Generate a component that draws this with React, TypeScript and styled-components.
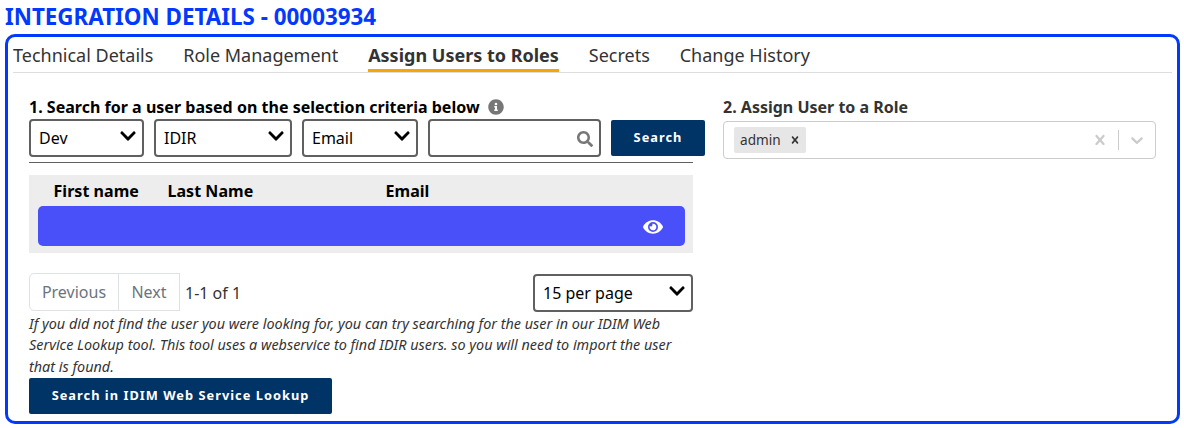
import React from 'react';
import styled, { createGlobalStyle } from 'styled-components';
import { FaChevronDown, FaEye, FaInfoCircle, FaSearch } from 'react-icons/fa';

const GlobalStyle = createGlobalStyle`
  * { box-sizing: border-box; }
  body {
    margin: 0;
    background: #fff;
    color: #333;
    font: 16px/24px 'Noto Sans', sans-serif;
  }
`;

const Page = styled.main`
  height: 428px;
  padding: 0 4px 4px 5px;
  overflow: hidden;
`;

const Title = styled.h1`
  margin: 0;
  height: 34px;
  color: #0339fd;
  font-size: 22.4px;
  font-weight: 700;
  line-height: 33px;
  white-space: nowrap;
`;

const Panel = styled.section`
  height: 390px;
  border: 3px solid #0339fd;
  border-radius: 10px;
  padding: 0 5px;
`;

const Tabs = styled.nav`
  display: flex;
  gap: 29.9px;
  height: 36px;
  border-bottom: 1px solid #ddd;
`;

const Tab = styled.a<{ $active?: boolean }>`
  height: 35px;
  padding-top: 5px;
  border-bottom: 3px solid ${(p) => (p.$active ? '#fba500' : 'transparent')};
  font-size: 18px;
  font-weight: ${(p) => (p.$active ? 700 : 400)};
  line-height: 27px;
  white-space: nowrap;
`;

const Columns = styled.div`
  display: flex;
  gap: 30px;
  padding: 22px 16px 0;
`;

const SearchColumn = styled.div`
  width: 664px;
  flex: none;
`;

const RoleColumn = styled.div`
  flex: 1;
`;

const Heading = styled.h2<{ $dark?: boolean }>`
  display: flex;
  align-items: center;
  gap: 8px;
  margin: 0;
  height: 24px;
  color: ${(p) => (p.$dark ? '#000' : '#333')};
  font-size: 16px;
  font-weight: 700;
  letter-spacing: ${(p) => (p.$dark ? '0.015px' : 'normal')};
  white-space: nowrap;

  svg { color: #777; }
`;

const Filters = styled.div`
  display: flex;
  align-items: center;
  gap: 10px;
  width: 676px;
  height: 38px;
`;

const SelectBox = styled.div<{ $width: number }>`
  display: flex;
  justify-content: space-between;
  width: ${(p) => p.$width}px;
  height: 38px;
  flex: none;
  padding: 0 5px 0 8px;
  border: 2px solid #606060;
  border-radius: 4px;
  color: #000;
  line-height: 35px;

  svg { margin-top: 6px; }
`;

const SearchField = styled.label`
  display: flex;
  align-items: center;
  width: 173px;
  height: 38px;
  padding-right: 6px;
  border: 2px solid #606060;
  border-radius: 4px;

  svg { color: #777; flex: none; margin-top: 1px; }
`;

const Input = styled.input`
  width: 100%;
  min-width: 0;
  border: 0;
  outline: 0;
  background: transparent;
  font: inherit;
`;

const Button = styled.button<{ $width: number }>`
  width: ${(p) => p.$width}px;
  height: 36px;
  flex: none;
  padding: 0 0 2px;
  border: 0;
  border-radius: 2px;
  background: #036;
  color: #fff;
  font: 700 12.8px/34px 'Noto Sans', sans-serif;
  letter-spacing: 1.02px;
  white-space: nowrap;
`;

const Rule = styled.hr`
  margin: 5px 0 12px;
  border: 0;
  border-top: 1px solid #606060;
`;

const Results = styled.div`
  height: 78px;
  padding: 0 8px 7px 9px;
  background: #ededed;
`;

const ResultsHead = styled.div`
  display: grid;
  grid-template-columns: 114px 218px 1fr;
  height: 31px;
  padding-left: 15.5px;
  color: #000;
  font-weight: 700;
  letter-spacing: 0.04px;
  line-height: 32px;
`;

const ResultRow = styled.div`
  display: flex;
  align-items: center;
  justify-content: flex-end;
  height: 40px;
  padding: 1px 22px 0 0;
  border-radius: 5px;
  background: #4950fa;
  color: #fff;
`;

const Pager = styled.div`
  display: flex;
  height: 39px;
  margin-top: 20px;
`;

const PageButton = styled.button<{ $first?: boolean }>`
  height: 38px;
  width: ${(p) => (p.$first ? 90 : 62)}px;
  margin-left: ${(p) => (p.$first ? 0 : -1)}px;
  padding: 0;
  border: 1px solid #dee2e6;
  border-radius: ${(p) => (p.$first ? '5px 0 0 5px' : '0')};
  background: #fff;
  color: #6c757d;
  font: 16px/36px 'Noto Sans', sans-serif;
`;

const PageCount = styled.span`
  flex: 1;
  padding-left: 5px;
  line-height: 40px;
`;

const PageSize = styled.div`
  margin-top: 1px;
`;

const Hint = styled.p`
  margin: 1px 0 0;
  height: 65px;
  font-size: 14.4px;
  font-style: italic;
  line-height: 21.4px;
  white-space: nowrap;
`;

const RoleSelect = styled.div`
  display: flex;
  align-items: center;
  height: 38px;
  margin-top: 2px;
  padding: 0 8px 0 10px;
  border: 1px solid #ccc;
  border-radius: 4px;
  color: #ccc;
`;

const Chip = styled.span`
  display: flex;
  align-items: center;
  height: 26px;
  margin-right: auto;
  padding: 0 4px 0 6px;
  gap: 7px;
  border-radius: 2px;
  background: #e6e6e6;
  color: #333;
  font-size: 13.6px;
`;

const Separator = styled.span`
  width: 1px;
  height: 20px;
  margin: 0 8px;
  background: #ccc;
`;

const crossPath =
  'M14.348 14.849c-0.469 0.469-1.229 0.469-1.697 0l-2.651-3.030-2.651 3.029c-0.469 0.469-1.229 0.469-1.697 0-0.469-0.469-0.469-1.229 0-1.697l2.758-3.15-2.759-3.152c-0.469-0.469-0.469-1.228 0-1.697s1.228-0.469 1.697 0l2.652 3.031 2.651-3.031c0.469-0.469 1.228-0.469 1.697 0s0.469 1.229 0 1.697l-2.758 3.152 2.758 3.15c0.469 0.469 0.469 1.229 0 1.698z';
const caretPath =
  'M4.516 7.548c0.436-0.446 1.043-0.481 1.576 0l3.908 3.747 3.908-3.747c0.533-0.481 1.141-0.446 1.574 0 0.436 0.445 0.408 1.197 0 1.615-0.406 0.418-4.695 4.502-4.695 4.502-0.217 0.223-0.502 0.335-0.787 0.335s-0.57-0.112-0.789-0.335c0 0-4.287-4.084-4.695-4.502s-0.436-1.17 0-1.615z';

const GlyphSvg = styled.svg`
  display: block;
  fill: currentColor;
`;

const Glyph = ({ d, size }: { d: string; size: number }) => (
  <GlyphSvg width={size} height={size} viewBox="0 0 20 20">
    <path d={d} />
  </GlyphSvg>
);

const Select = ({ value, width }: { value: string; width: number }) => (
  <SelectBox $width={width}>
    {value}
    <FaChevronDown size={18} />
  </SelectBox>
);

const tabs = ['Technical Details', 'Role Management', 'Assign Users to Roles', 'Secrets', 'Change History'];

export default function App() {
  return (
    <Page>
      <GlobalStyle />
      <Title>INTEGRATION DETAILS - 00003934</Title>
      <Panel>
        <Tabs>
          {tabs.map((name, i) => (
            <Tab key={name} $active={i === 2}>{name}</Tab>
          ))}
        </Tabs>
        <Columns>
          <SearchColumn>
            <Heading $dark>
              1. Search for a user based on the selection criteria below
              <FaInfoCircle size={16} />
            </Heading>
            <Filters>
              <Select value="Dev" width={115} />
              <Select value="IDIR" width={138} />
              <Select value="Email" width={116} />
              <SearchField>
                <Input aria-label="Search text" />
                <FaSearch size={16} />
              </SearchField>
              <Button $width={94}>Search</Button>
            </Filters>
            <Rule />
            <Results>
              <ResultsHead>
                <span>First name</span>
                <span>Last Name</span>
                <span>Email</span>
              </ResultsHead>
              <ResultRow>
                <FaEye size={20} />
              </ResultRow>
            </Results>
            <Pager>
              <PageButton $first>Previous</PageButton>
              <PageButton>Next</PageButton>
              <PageCount>1-1 of 1</PageCount>
              <PageSize>
                <Select value="15 per page" width={160} />
              </PageSize>
            </Pager>
            <Hint>
              If you did not find the user you were looking for, you can try searching for the user in our IDIM Web
              <br />
              Service Lookup tool. This tool uses a webservice to find IDIR users. so you will need to import the user
              <br />
              that is found.
            </Hint>
            <Button $width={303}>Search in IDIM Web Service Lookup</Button>
          </SearchColumn>
          <RoleColumn>
            <Heading>2. Assign User to a Role</Heading>
            <RoleSelect>
              <Chip>
                admin
                <Glyph d={crossPath} size={14} />
              </Chip>
              <Glyph d={crossPath} size={20} />
              <Separator />
              <Glyph d={caretPath} size={20} />
            </RoleSelect>
          </RoleColumn>
        </Columns>
      </Panel>
    </Page>
  );
}
